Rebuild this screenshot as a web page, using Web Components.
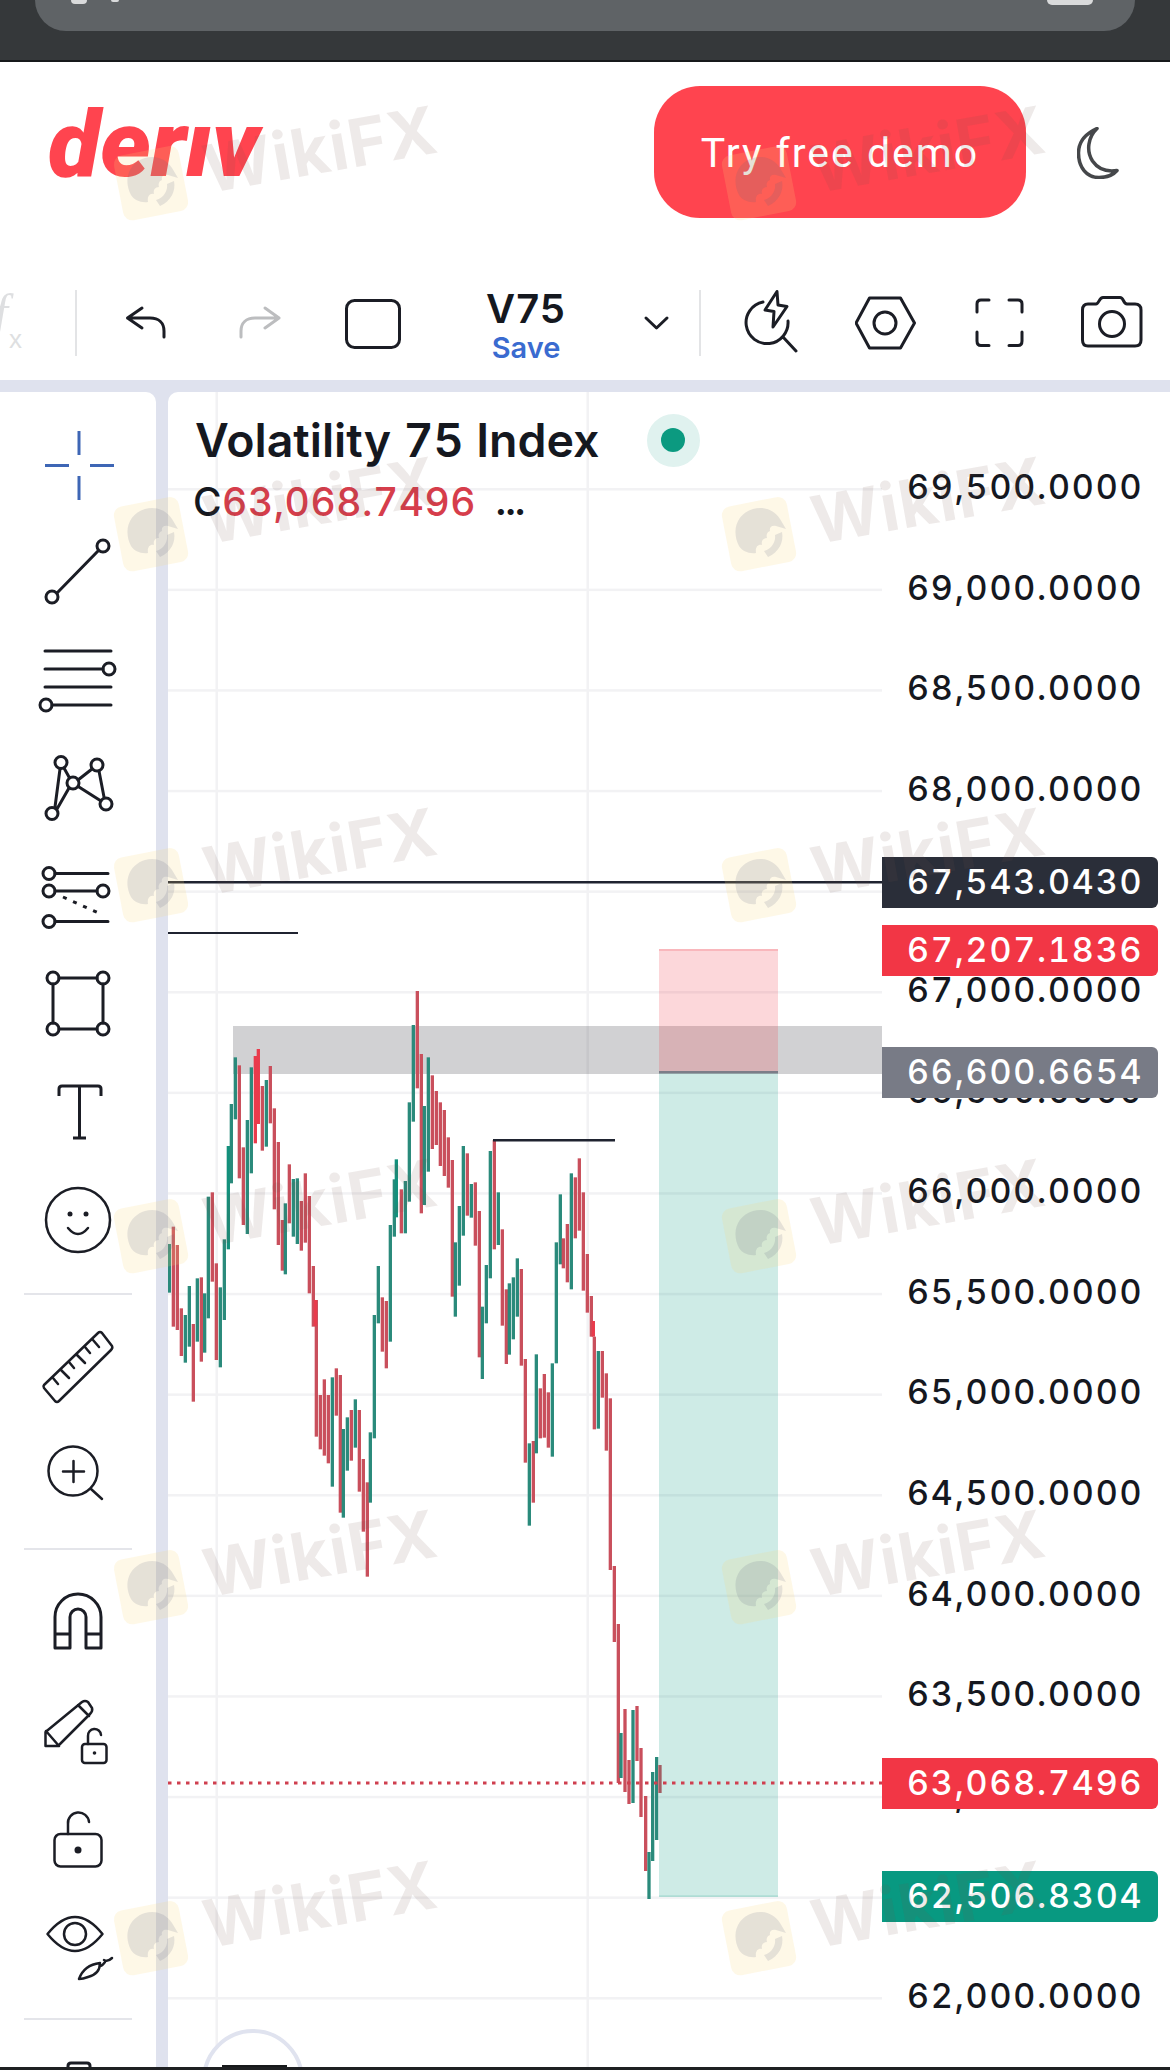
<!DOCTYPE html>
<html lang="en">
<head>
<meta charset="utf-8">
<title>Deriv chart</title>
<style>
    html, body { margin: 0; padding: 0; background: #fff; }
    body { width: 1170px; height: 2070px; overflow: hidden; position: relative; font-family: Inter, "Liberation Sans", sans-serif; font-variant-numeric: tabular-nums; }
    app-shell { display: block; }
</style>
</head>
<body>
<app-shell></app-shell>
<wikifx-layer></wikifx-layer>

<script>
class BrowserBar extends HTMLElement {
    constructor() {
        super();
        this.attachShadow({ mode: "open" });
        this.shadowRoot.innerHTML = `
            <style>
                :host { display: block; height: 60px; background: #35383a; border-bottom: 2px solid #17191b; }
                .pill {
                    position: relative;
                    height: 31px;
                    margin: 0 35px;
                    background: #5f6366;
                    border-radius: 0 0 38px 38px;
                }
                .dot { position: absolute; top: 0; background: #d9dadb; border-radius: 0 0 8px 8px; }
            </style>
            <div class="pill">
                <div class="dot" style="left:36px;width:16px;height:4px"></div>
                <div class="dot" style="left:76px;width:8px;height:2px"></div>
                <div class="dot" style="left:1012px;width:46px;height:5px"></div>
            </div>
        `;
    }
}

class DerivLogo extends HTMLElement {
    constructor() {
        super();
        this.attachShadow({ mode: "open" });
        this.shadowRoot.innerHTML = `
            <style>
                :host { display: block; position: relative; width: 216px; height: 90px; }
                .word {
                    font: italic 900 93px/90px Roboto, "Liberation Sans", sans-serif;
                    color: #ff444f;
                    letter-spacing: 0;
                    white-space: nowrap;
                    transform: scaleX(1.03);
                    transform-origin: left center;
                }
                .mask { position: absolute; left: 138px; top: 0; width: 32px; height: 24px; background: #fff; }
            </style>
            <div class="word">deriv</div>
            <div class="mask"></div>
        `;
    }
}

class SiteHeader extends HTMLElement {
    constructor() {
        super();
        this.attachShadow({ mode: "open" });
        this.shadowRoot.innerHTML = `
            <style>
                :host { display: flex; height: 200px; box-sizing: border-box; background: #fff; padding: 24px 51px 0 48px; }
                deriv-logo { margin-top: 14px; }
                .cta {
                    width: 372px;
                    height: 132px;
                    margin-left: auto;
                    padding-top: 2px;
                    box-sizing: border-box;
                    border-radius: 46px;
                    background: #ff444f;
                    color: #fff;
                    display: flex;
                    align-items: center;
                    justify-content: center;
                    font: 400 41px Roboto, sans-serif;
                    letter-spacing: 2px;
                }
                svg { margin: 41px 0 0 51px; }
            </style>
            <deriv-logo></deriv-logo>
            <div class="cta">Try free demo</div>
            <svg width="42" height="52" viewBox="1077 127 42 52" fill="none" stroke="#45474a" stroke-width="3.500" stroke-linejoin="round">
                <path d="M1097 128.500C1085 134 1078.500 143 1078.500 153C1078.500 168 1087 177.500 1099 177.500C1107 177.500 1113 175 1117 170.500C1107 172 1098 169 1092.500 161C1086 151 1088 137 1097 128.500Z"/>
            </svg>
        `;
    }
}

class ChartToolbar extends HTMLElement {
    constructor() {
        super();
        this.attachShadow({ mode: "open" });
        this.shadowRoot.innerHTML = `
            <style>
                :host { display: flex; height: 118px; background: #fff; overflow: hidden; align-items: stretch; }
                svg { display: block; flex: none; height: 118px; fill: none; stroke: #1b1d25; stroke-width: 3; stroke-linecap: round; stroke-linejoin: round; }
                .fx { position: relative; width: 75px; flex: none; color: #dedfe1; font-family: "Liberation Serif", serif; }
                .fx b { position: absolute; left: -6px; top: 25px; font: italic 400 50px/50px "Liberation Serif", serif; }
                .fx i { position: absolute; left: 9px; top: 62px; font: 400 26px/30px "Liberation Sans", sans-serif; }
                .sep { flex: none; width: 2px; height: 66px; margin-top: 28px; background: #e3e4e6; }
                .symbol { flex: none; width: 180px; text-align: center; }
                .symbol .name { font: 600 40px/40px Inter, sans-serif; color: #15181f; margin-top: 27px; letter-spacing: 1px; }
                .symbol .save { font: 600 29px/30px Inter, sans-serif; color: #3a6bd0; margin-top: 4px; }
            </style>
            <div class="fx"><b>f</b><i>x</i></div>
            <div class="sep"></div>
            <svg style="width:131px" viewBox="77 262 131 118" stroke-width="2.500">
                <path d="M142 308L127.500 318L142 328M127.500 318H150C159 318 164 323 164 331V337"/>
            </svg>
            <svg style="width:102px;stroke:#bcbdbf" viewBox="208 262 102 118">
                <path d="M265 308L279 318L265 328M279 318H255C246 318 241 323 241 331V337"/>
            </svg>
            <svg style="width:126px" viewBox="310 262 126 118">
                <rect x="346.500" y="300.500" width="53" height="47" rx="8"/>
            </svg>
            <div class="symbol"><div class="name">V75</div><div class="save">Save</div></div>
            <svg style="width:83px" viewBox="616 262 83 118" stroke-width="2.500">
                <path d="M646 318L656.500 328L667 318"/>
            </svg>
            <div class="sep"></div>
            <svg style="width:154px" viewBox="701 262 154 118">
                <path d="M763 302A21 21 0 1 0 788 321M783 337L796 351"/>
                <path d="M777 291.500L765 310L774 311.500L773 327L787 306.500L778 305Z"/>
            </svg>
            <svg style="width:108px" viewBox="855 262 108 118">
                <path d="M856 323L869.500 298H900.500L914.500 323L900.500 348H869.500Z"/>
                <circle cx="885" cy="323" r="11"/>
            </svg>
            <svg style="width:106px" viewBox="963 262 106 118">
                <path d="M977 312V304Q977 300 981 300H989M1009 300H1018Q1022 300 1022 304V312M977 332V341Q977 345.500 981 345.500H989M1009 345.500H1018Q1022 345.500 1022 341V332"/>
            </svg>
            <svg style="width:101px" viewBox="1069 262 101 118">
                <path d="M1088 304H1096C1099 304 1099 297.500 1103 297.500H1120C1124 297.500 1123 304 1127 304H1135Q1141 304 1141 310V340Q1141 346 1135 346H1088Q1082.500 346 1082.500 340V310Q1082.500 304 1088 304Z"/>
                <circle cx="1112" cy="324" r="12.500"/>
            </svg>
        `;
    }
}

// every icon is drawn in page coordinates, the viewBox moves it into its cell
const RAIL_ITEMS = [
    { cy: 465, h: 108, body: `<g style="stroke:#3e66b5" stroke-linecap="butt"><path d="M45 465.500H69M90 465.500H114M79 431V455M79 476V500"/></g>` },
    { cy: 573, h: 108, body: `<path d="M57 593L98 551"/><circle cx="52" cy="597" r="6"/><circle cx="103" cy="546" r="6"/>` },
    { cy: 681, h: 108, body: `<path d="M45 651H111M45 669H103M45 687H111M52 705H111"/><circle cx="109" cy="669" r="6"/><circle cx="46" cy="705" r="6"/>` },
    { cy: 789, h: 108, body: `<path d="M60 769L55 807M57 809L69 788M64 768L69 777M78 780L92 769M99 771L104 797M79 787L101 801"/><circle cx="61" cy="762.500" r="6"/><circle cx="97" cy="765" r="6"/><circle cx="73" cy="783" r="6"/><circle cx="106" cy="804" r="6"/><circle cx="52" cy="813.500" r="6"/>` },
    { cy: 897, h: 108, body: `<path d="M55 873.500H108M55 891H97M55 921.500H108"/><path d="M63 897L103 915" stroke-dasharray="4 7" stroke-linecap="butt"/><circle cx="49" cy="873.500" r="6"/><circle cx="49" cy="891" r="6"/><circle cx="103" cy="891" r="6"/><circle cx="49" cy="921.500" r="6"/>` },
    { cy: 1005, h: 108, body: `<path d="M59 978H97M59 1029H97M53 984V1023M103 984V1023"/><circle cx="53" cy="978" r="6"/><circle cx="103" cy="978" r="6"/><circle cx="53" cy="1029" r="6"/><circle cx="103" cy="1029" r="6"/>` },
    { cy: 1113, h: 108, body: `<path d="M59 1096V1089Q59 1086 62 1086H98Q101 1086 101 1089V1096M79.500 1086V1138M73 1138H86" stroke-linecap="butt"/>` },
    { cy: 1221, h: 108, body: `<circle cx="78" cy="1220" r="32" stroke-width="2.500"/><circle cx="70" cy="1214" r="2.500" style="fill:#1b1d25;stroke:none"/><circle cx="86" cy="1214" r="2.500" style="fill:#1b1d25;stroke:none"/><path d="M68 1228Q78 1240 88 1228" stroke-width="2.500"/>` },
    { divider: 18, after: 18 },
    { cy: 1367, h: 108, body: `<path d="M44 1385L98 1333Q100 1331 102 1333L112 1346Q113 1348 111 1350L59 1401Q57 1403 55 1401L44 1388Q43 1386 44 1385Z" stroke-width="2.500"/><path d="M53 1378L58 1384M61 1370L69 1378M69 1362L74 1368M77 1355L85 1363M85 1347L90 1353M93 1340L99 1347" stroke-width="2.500"/>` },
    { cy: 1473, h: 104, body: `<circle cx="73" cy="1471" r="24.500" stroke-width="2.500"/><path d="M63 1471.500H84M73.500 1461V1482M91 1489L102 1499" stroke-width="2.500"/>` },
    { divider: 23, after: 17 },
    { cy: 1621, h: 108, body: `<path d="M55 1648V1617A23 23 0 0 1 101 1617V1648H86V1617A8 8 0 0 0 70 1617V1648ZM55 1634H70M86 1634H101" stroke-linecap="butt"/>` },
    { cy: 1729, h: 108, body: `<path d="M45.500 1746V1732L82 1702Q85 1700 88 1702L92 1708Q93 1711 90 1714L58 1746ZM46 1731L59 1746M78 1705L89 1716" stroke-width="2.500"/><rect x="82" y="1744" width="24.500" height="19" rx="3" stroke-width="2.500"/><path d="M88 1744V1736A6.500 6.500 0 0 1 101 1735" stroke-width="2.500"/><circle cx="94.500" cy="1753" r="1.800" style="fill:#1b1d25;stroke:none"/>` },
    { cy: 1837, h: 108, body: `<rect x="54.500" y="1834" width="47" height="32.500" rx="6" stroke-width="2.500"/><path d="M68 1834V1824A10.500 10.500 0 0 1 89 1822" stroke-width="2.500"/><circle cx="78" cy="1850" r="3.500" style="fill:#1b1d25;stroke:none"/>` },
    { cy: 1945, h: 108, body: `<path d="M47.500 1934Q75 1900 102.500 1934Q75 1968 47.500 1934Z" stroke-width="2.500"/><circle cx="75" cy="1934" r="11" stroke-width="2.500"/><path d="M79 1979Q84 1965 100 1963Q100 1974 88 1977Q83 1979 79 1979ZM100 1966Q102 1966 105 1962M104 1960Q108 1962 112 1958" stroke-width="2.500"/>` },
    { divider: 19, after: 27 },
    { cy: 2085, h: 76, body: `<path d="M68 2070V2066Q68 2063 71 2063H87Q90 2063 90 2066V2070"/>` },
];

class ToolRail extends HTMLElement {
    constructor() {
        super();
        this.attachShadow({ mode: "open" });
        const cells = RAIL_ITEMS.map((item) => {
            if (item.divider) {
                return `<div class="divider" style="margin-top:${item.divider}px;margin-bottom:${item.after}px"></div>`;
            }
            return `
                <div class="cell" style="height:${item.h}px">
                    <svg width="76" height="76" viewBox="40 ${item.cy - 38} 76 76">${item.body}</svg>
                </div>`;
        }).join("");
        this.shadowRoot.innerHTML = `
            <style>
                :host { display: block; flex: none; width: 156px; height: 1675px; padding-top: 19px; box-sizing: border-box; background: #fff; border-top-right-radius: 10px; overflow: hidden; }
                .cell { display: flex; align-items: center; justify-content: center; }
                svg { display: block; fill: none; stroke: #1b1d25; stroke-width: 3; stroke-linecap: round; stroke-linejoin: round; overflow: visible; }
                .divider { height: 2px; width: 108px; margin-left: 24px; background: #e4e5ea; }
            </style>
            ${cells}
        `;
    }
}

class ChartLegend extends HTMLElement {
    constructor() {
        super();
        this.attachShadow({ mode: "open" });
        this.shadowRoot.innerHTML = `
            <style>
                :host { display: block; position: absolute; left: 27px; top: 20px; color: #15181f; font-family: Inter, sans-serif; }
                .row { display: flex; align-items: center; white-space: nowrap; }
                .title { font-weight: 600; font-size: 46.500px; line-height: 56px; }
                .status { width: 53px; height: 53px; margin-left: 47px; border-radius: 50%; background: #e0f2ef; display: flex; align-items: center; justify-content: center; }
                .status i { width: 24px; height: 24px; border-radius: 50%; background: #0b9a80; }
                .quote { font-weight: 500; font-size: 39px; line-height: 44px; margin-top: 12px; margin-left: -2px; letter-spacing: .5px; }
                .quote span { color: #d63d4b; margin-left: 0; }
                .quote b { font-weight: 700; font-size: 36px; margin-left: 20px; letter-spacing: 0; }
            </style>
            <div class="row">
                <div class="title">Volatility 75 Index</div>
                <div class="status"><i></i></div>
            </div>
            <div class="row quote">C<span>63,068.7496</span><b>...</b></div>
        `;
    }
}

// x in 1/3 px from 160, y in 1/3 px from 960
const CANDLES = `g28,852,998 r40,800,1100 r52,855,1110 r64,1045,1188 g76,1065,1208 g88,978,1160 r100,1092,1325 g112,955,1145
r124,952,1205 g134,1000,1178 g145,710,1075 r157,697,965 r169,910,1200 g181,982,1222 g193,838,1080 G205,558,868 g214,432,670
g226,292,478 r238,316,655 r250,562,795 g262,480,822 g274,322,640 R286,288,550 R295,267,492 r307,378,572 g319,360,560 r331,318,490
r343,445,748 r355,546,855 r367,780,932 g376,730,943 r388,613,790 g400,657,830 g412,655,852 r424,723,872 r436,640,848 r448,708,1000
r460,918,1100 r469,1020,1430 R466,1020,1098 r481,1305,1468 r493,1258,1487 r505,1305,1510 g517,1252,1580 r529,1225,1367 r541,1245,1658
g550,1407,1673 g562,1372,1532 r574,1350,1502 g586,1318,1463 r598,1350,1595 r610,1497,1715 r622,1567,1850 g631,1417,1628 g643,1065,1435
g655,918,1090 r667,1012,1175 r679,1023,1225 g691,795,1145 g703,658,830 G709,598,772 r724,688,820 g736,663,820 g748,427,725 g760,195,485
r772,93,385 r784,282,760 g793,438,735 g805,292,635 r817,346,567 r829,393,555 r841,427,618 r853,450,648 r865,532,683 r877,600,1010
g886,847,1070 g898,738,977 g910,558,827 r922,580,767 g934,672,773 r946,667,857 r958,753,1192 g967,1040,1257 g979,915,1090 g991,573,955
r1003,540,868 g1015,697,855 r1027,808,1097 r1039,988,1212 g1048,970,1184 g1060,952,1138 g1072,895,1070 r1084,927,1217 r1096,1197,1508
g1108,1450,1697 r1120,1443,1628 g1129,1183,1480 r1141,1285,1435 r1153,1242,1433 r1165,1297,1463 g1177,1210,1490 g1189,847,1210
g1201,703,913 r1210,835,925 r1222,792,967 g1234,640,988 r1246,652,835 r1258,595,812 r1270,697,992 r1282,882,1058 r1294,1008,1130
R1300,1083,1130 r1303,1130,1408 g1315,1173,1406 r1327,1173,1313 r1339,1240,1472 r1351,1315,1830 r1363,1818,2046 r1375,1992,2469
g1383,2319,2454 r1395,2247,2496 r1407,2400,2532 g1419,2250,2529 r1431,2238,2403 r1443,2364,2571 r1457,2508,2733 g1467,2676,2817
g1478,2436,2703 g1490,2391,2640 r1500,2415,2499`;

const CANDLE_COLORS = { g: "#2a8a7b", r: "#c94f5c", G: "#13907c", R: "#e93b4c" };

function priceToY(price) {
    return 1998 - (price - 62000) / 500 * 100.6;
}

class ChartPlot extends HTMLElement {
    constructor() {
        super();
        this.attachShadow({ mode: "open" });
        let grid = "";
        for (let p = 62000; p <= 69500; p += 500) {
            grid += `<rect x="168" y="${priceToY(p) - 1}" width="714" height="2.500"/>`;
        }
        const bars = CANDLES.split(/\s+/).map((c) => {
            const [x, top, bottom] = c.slice(1).split(",").map(Number);
            const px = 160 + x / 3;
            const py = 960 + top / 3;
            return `<rect x="${px - 1.65}" y="${py}" width="3.300" height="${(bottom - top) / 3}" fill="${CANDLE_COLORS[c[0]]}"/>`;
        }).join("");
        this.shadowRoot.innerHTML = `
            <style>
                :host { display: block; flex: none; width: 714px; height: 1675px; }
                svg { display: block; }
            </style>
            <svg width="714" height="1675" viewBox="168 392 714 1675">
                <g fill="#f2f2f4">
                    ${grid}
                    <rect x="215.500" y="392" width="2.500" height="1675"/>
                    <rect x="586.500" y="392" width="2.500" height="1675"/>
                </g>
                <rect x="233" y="1026" width="649" height="48" fill="#3a3a3f" fill-opacity=".23"/>
                ${bars}
                <rect x="659" y="949" width="119" height="123" fill="#f23645" fill-opacity=".2"/>
                <rect x="659" y="949" width="119" height="2" fill="#f23645" fill-opacity=".2"/>
                <rect x="659" y="1073" width="119" height="824" fill="#089981" fill-opacity=".2"/>
                <rect x="659" y="1895" width="119" height="2" fill="#089981" fill-opacity=".12"/>
                <rect x="659" y="1071" width="119" height="2.500" fill="#7b7d88"/>
                <rect x="168" y="881" width="714" height="2.500" fill="#1f2330"/>
                <rect x="168" y="932" width="130" height="2" fill="#1f2330"/>
                <rect x="493" y="1139" width="122" height="2.500" fill="#1f2330"/>
                <path d="M168 1783H882" stroke="#cf3f4f" stroke-width="3" stroke-dasharray="3.500 5.500" fill="none"/>
                <circle cx="253" cy="2080" r="49" fill="#fff" stroke="#e0e3ef" stroke-width="4"/>
                <rect x="222" y="2065" width="65" height="4" fill="#17191b"/>
            </svg>
        `;
    }
}

class PriceTag extends HTMLElement {
    constructor() {
        super();
        this.attachShadow({ mode: "open" });
        const tone = this.getAttribute("tone");
        const y = Number(this.getAttribute("y"));
        this.shadowRoot.innerHTML = `
            <style>
                :host {
                    display: block;
                    position: absolute;
                    left: 0;
                    top: ${y - 392 - 25.5}px;
                    width: 276px;
                    height: 51px;
                    box-sizing: border-box;
                    padding-left: 25px;
                    font: 500 34px/49px Inter, sans-serif;
                    font-variant-numeric: tabular-nums;
                    letter-spacing: 1.8px;
                    white-space: nowrap;
                    color: ${tone ? "#fff" : "#15181f"};
                    background: ${tone || "transparent"};
                    border-radius: 0 6px 6px 0;
                }
            </style>
            <slot></slot>
        `;
    }
}

class PriceAxis extends HTMLElement {
    constructor() {
        super();
        this.attachShadow({ mode: "open" });
        let ticks = "";
        for (let p = 69500; p >= 62000; p -= 500) {
            // 67,500 and 62,500 sit fully under the live price tags
            if (p === 67500 || p === 62500) continue;
            const text = p.toLocaleString("en-US") + ".0000";
            ticks += `<price-tag y="${priceToY(p) - 1.5}">${text}</price-tag>`;
        }
        this.shadowRoot.innerHTML = `
            <style>
                :host { display: block; flex: none; position: relative; width: 288px; height: 1675px; }
            </style>
            ${ticks}
            <price-tag y="882.500" tone="#2a2e39">67,543.0430</price-tag>
            <price-tag y="950.500" tone="#f23645">67,207.1836</price-tag>
            <price-tag y="1072.500" tone="#787b86">66,600.6654</price-tag>
            <price-tag y="1783.500" tone="#f23645">63,068.7496</price-tag>
            <price-tag y="1896.500" tone="#089981">62,506.8304</price-tag>
        `;
    }
}

class ChartPane extends HTMLElement {
    constructor() {
        super();
        this.attachShadow({ mode: "open" });
        this.shadowRoot.innerHTML = `
            <style>
                :host { display: flex; position: relative; flex: none; width: 1002px; height: 1675px; background: #fff; border-top-left-radius: 10px; overflow: hidden; }
            </style>
            <chart-plot></chart-plot>
            <price-axis></price-axis>
            <chart-legend></chart-legend>
        `;
    }
}

class AppShell extends HTMLElement {
    constructor() {
        super();
        this.attachShadow({ mode: "open" });
        this.shadowRoot.innerHTML = `
            <style>
                :host { display: block; width: 1170px; height: 2070px; overflow: hidden; }
                .gutter { height: 12px; background: #dfe2ee; }
                .main { display: flex; gap: 12px; height: 1675px; background: #dfe2ee; }
                .foot { height: 3px; background: #1e2022; }
            </style>
            <browser-bar></browser-bar>
            <site-header></site-header>
            <chart-toolbar></chart-toolbar>
            <div class="gutter"></div>
            <div class="main">
                <tool-rail></tool-rail>
                <chart-pane></chart-pane>
            </div>
            <div class="foot"></div>
        `;
    }
}

class WikifxMark extends HTMLElement {
    constructor() {
        super();
        this.attachShadow({ mode: "open" });
        this.shadowRoot.innerHTML = `
            <style>
                :host { display: block; position: relative; width: 608px; height: 351px; }
                svg { position: absolute; left: 0; top: 0; }
                .word {
                    position: absolute;
                    left: 90px;
                    top: -44px;
                    font: 700 66px/100px Inter, sans-serif;
                    letter-spacing: 1px;
                    color: rgba(112, 82, 72, .12);
                    transform: rotate(-10deg);
                    white-space: nowrap;
                }
            </style>
            <svg width="80" height="80" viewBox="0 0 80 80">
                <rect x="6" y="7" width="66" height="66" rx="9" transform="rotate(-11 40 40)" fill="#f8d878" fill-opacity=".18"/>
                <g fill="#5a5c80" fill-opacity=".15">
                    <path d="M19 52C11 36 17 20 33 15C44 12 54 16 60 25L66 35L56 32C52 31 49 33 50 37C47 38 46 41 47 44C43 44 41 47 42 51C38 50 35 53 36 59C29 60 22 57 19 52Z"/>
                    <path d="M62 38C64 48 59 58 48 63L44 57C52 55 56 47 55 41Z"/>
                </g>
            </svg>
            <div class="word">WikiFX</div>
        `;
    }
}

class WikifxLayer extends HTMLElement {
    constructor() {
        super();
        this.attachShadow({ mode: "open" });
        this.shadowRoot.innerHTML = `
            <style>
                :host {
                    position: absolute;
                    left: 0;
                    top: 0;
                    width: 1170px;
                    height: 2070px;
                    overflow: hidden;
                    pointer-events: none;
                    display: grid;
                    grid-template-columns: repeat(2, 608px);
                    grid-auto-rows: 351px;
                    padding: 143px 0 0 112px;
                    box-sizing: border-box;
                }
            </style>
            ${"<wikifx-mark></wikifx-mark>".repeat(12)}
        `;
    }
}

customElements.define("browser-bar", BrowserBar);
customElements.define("deriv-logo", DerivLogo);
customElements.define("site-header", SiteHeader);
customElements.define("chart-toolbar", ChartToolbar);
customElements.define("tool-rail", ToolRail);
customElements.define("chart-legend", ChartLegend);
customElements.define("chart-plot", ChartPlot);
customElements.define("price-tag", PriceTag);
customElements.define("price-axis", PriceAxis);
customElements.define("chart-pane", ChartPane);
customElements.define("app-shell", AppShell);
customElements.define("wikifx-mark", WikifxMark);
customElements.define("wikifx-layer", WikifxLayer);
</script>
</body>
</html>
